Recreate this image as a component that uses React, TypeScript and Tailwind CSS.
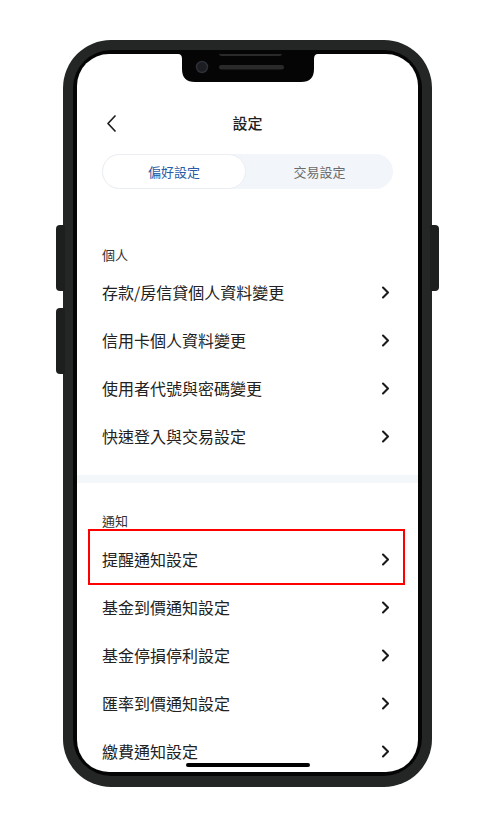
import React from "react";

const Chevron = () => (
  <svg width="9" height="13" viewBox="0 0 9 13" fill="none">
    <path d="M2 1.5 L7 6.5 L2 11.5" stroke="#1a1a1a" strokeWidth="2.1" strokeLinecap="round" strokeLinejoin="round" />
  </svg>
);

const Item = ({ label, highlight }: { label: string; highlight?: boolean }) => (
  <div className="relative flex h-[48px] items-center justify-between pl-[25px] pr-[28px]">
    <span className="text-[16px] leading-none text-[#222]">{label}</span>
    <Chevron />
    {highlight && (
      <div className="absolute left-[11px] right-[13px] top-[-6px] bottom-[-2px] border-2 border-[#ff0000]" />
    )}
  </div>
);

export default function App() {
  const personal = ["存款/房信貸個人資料變更", "信用卡個人資料變更", "使用者代號與密碼變更", "快速登入與交易設定"];
  const notify = ["提醒通知設定", "基金到價通知設定", "基金停損停利設定", "匯率到價通知設定", "繳費通知設定"];
  return (
    <div
      className="flex h-[828px] w-[495px] justify-center bg-white pt-[40px]"
      style={{ fontFamily: '"Noto Sans CJK TC", "Noto Sans", sans-serif' }}
    >
      <div className="relative h-[747px] w-[369px]">
        {/* side buttons */}
        <div className="absolute left-[-7px] top-[185px] h-[66px] w-[9px] rounded-l-[4px] bg-[#1d1f1f]" />
        <div className="absolute left-[-7px] top-[268px] h-[66px] w-[9px] rounded-l-[4px] bg-[#1d1f1f]" />
        <div className="absolute right-[-7px] top-[185px] h-[66px] w-[9px] rounded-r-[4px] bg-[#1d1f1f]" />
        <div className="h-full w-full rounded-[48px] bg-[#242626] p-[10px] pb-[11px]">
          <div className="h-full w-full rounded-[38px] bg-[#050505] p-[4px]">
            <div className="relative h-full w-full overflow-hidden rounded-[32px] bg-white">
              {/* notch */}
              <svg className="absolute left-[101px] top-0" width="140" height="28" viewBox="0 0 140 28">
                <path d="M0 0 H140 Q136 0 136 5 V15 Q136 28 123 28 H17 Q4 28 4 15 V5 Q4 0 0 0 Z" fill="#050505" />
                <circle cx="24" cy="13" r="5.5" fill="#1b1d22" stroke="#2c2f36" strokeWidth="1.5" />
                <rect x="41" y="11" width="65" height="4.5" rx="2.2" fill="#2a2a2a" />
                <rect x="41" y="-3" width="63" height="5" rx="2.5" fill="#2a2a2a" />
              </svg>
              {/* header */}
              <div className="pt-[47px]">
                <div className="relative flex h-[44px] items-center justify-center">
                  <svg className="absolute left-[29px]" width="11" height="17" viewBox="0 0 11 17" fill="none">
                    <path d="M9 1 L2 8.5 L9 16" stroke="#1f1f1f" strokeWidth="1.7" strokeLinecap="round" strokeLinejoin="round" />
                  </svg>
                  <span className="text-[15px] font-medium text-[#222]">設定</span>
                </div>
                <div className="mx-[25px] mt-[9px] flex h-[35px] rounded-full bg-[#f2f5f9]">
                  <div className="flex w-[144px] items-center justify-center rounded-full border border-[#eaeef3] bg-white text-[13px] text-[#2b5ba6]">
                    偏好設定
                  </div>
                  <div className="flex flex-1 items-center justify-center text-[13px] text-[#6b6b6b]">交易設定</div>
                </div>
              </div>
              {/* personal */}
              <div className="mt-[56px] flex h-[20px] items-center pl-[25px] text-[13px] text-[#333]">個人</div>
              <div className="mt-[3px]">
                {personal.map((p) => (
                  <Item key={p} label={p} />
                ))}
              </div>
              <div className="mt-[15px] h-[8px] bg-[#f4f7fa]" />
              <div className="mt-[28px] flex h-[20px] items-center pl-[25px] text-[13px] text-[#333]">通知</div>
              <div className="mt-[4px]">
                {notify.map((p, i) => (
                  <Item key={p} label={p} highlight={i === 0} />
                ))}
              </div>
              {/* home indicator */}
              <div className="absolute bottom-[5px] left-[109px] h-[4px] w-[124px] rounded-full bg-black" />
            </div>
          </div>
        </div>
      </div>
    </div>
  );
}
